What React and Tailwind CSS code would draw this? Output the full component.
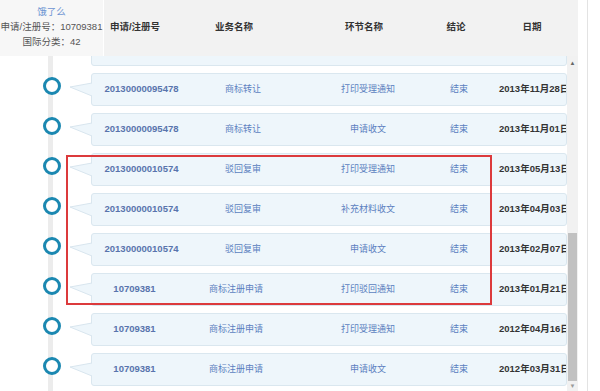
import React from "react";

const rows = [
  { id: "", biz: "", step: "", res: "", date: "", partial: true },
  { id: "20130000095478", biz: "商标转让", step: "打印受理通知", res: "结束", date: "2013年11月28日" },
  { id: "20130000095478", biz: "商标转让", step: "申请收文", res: "结束", date: "2013年11月01日" },
  { id: "20130000010574", biz: "驳回复审", step: "打印受理通知", res: "结束", date: "2013年05月13日" },
  { id: "20130000010574", biz: "驳回复审", step: "补充材料收文", res: "结束", date: "2013年04月03日" },
  { id: "20130000010574", biz: "驳回复审", step: "申请收文", res: "结束", date: "2013年02月07日" },
  { id: "10709381", biz: "商标注册申请", step: "打印驳回通知", res: "结束", date: "2013年01月21日", short: true },
  { id: "10709381", biz: "商标注册申请", step: "打印受理通知", res: "结束", date: "2012年04月16日", short: true },
  { id: "10709381", biz: "商标注册申请", step: "申请收文", res: "结束", date: "2012年03月31日", short: true },
];

function Row({ r }) {
  return (
    <div className="flex h-[40px] shrink-0">
      <div className="relative w-[68px] shrink-0">
        <div className="absolute left-[48px] top-0 bottom-0 w-[5px] bg-[#ececec]" />
        {!r.partial && (
          <div className="absolute left-[43px] top-[4px] w-[18px] h-[18px] rounded-full border-[3px] border-[#1b88b1] bg-white" />
        )}
      </div>
      <svg width="24" height="33" viewBox="0 0 24 33" className="relative z-10 -mr-[1px] shrink-0">
        <polygon points="2,14 24,10 24,23" fill="#eef6fb" />
        <polyline points="24,10 2,14 24,23" fill="none" stroke="#d8e5ee" strokeWidth="1" />
      </svg>
      <div className="flex h-[33px] w-[476px] shrink-0 items-center rounded-[3px] border border-[#dae7ef] bg-[#eef6fb] overflow-hidden">
        <div className={`w-[99px] shrink-0 text-center font-bold text-[9.5px] text-[#5874ad] ${r.short ? "pr-[14px]" : ""}`}>{r.id}</div>
        <div className={`w-[104px] shrink-0 text-center text-[9px] text-[#5b7fbf] ${r.short ? "pr-[14px]" : ""}`}>{r.biz}</div>
        <div className="w-[146px] shrink-0 text-center text-[9px] text-[#5b7fbf]">{r.step}</div>
        <div className="w-[36px] shrink-0 text-center text-[9px] text-[#5b7fbf]">{r.res}</div>
        <div className="w-[91px] shrink-0 pl-[22px] whitespace-nowrap overflow-hidden font-bold text-[9.5px] text-[#333333]">{r.date}</div>
      </div>
    </div>
  );
}

export default function App() {
  return (
    <div
      className="relative flex w-[600px] h-[391px] overflow-hidden bg-white"
      style={{ fontFamily: '"Liberation Sans", "Noto Sans CJK SC", sans-serif' }}
    >
      <div className="flex flex-col w-[578px] shrink-0">
        {/* Header */}
        <div className="flex h-[56px] shrink-0">
          <div className="w-[103px] shrink-0 bg-[#f7f7f7] flex flex-col items-center pt-[4px] text-[9.5px] leading-[15px] text-[#555555] whitespace-nowrap">
            <span className="text-[#6d93d2]">饿了么</span>
            <span>申请/注册号：10709381</span>
            <span>国际分类：42</span>
          </div>
          <div className="w-[2px] bg-white" />
          <div className="flex flex-1 items-start pt-[20px] bg-[#f2f2f2] text-[9.5px] font-bold text-[#333333]">
            <div className="w-[62px] text-center">申请/注册号</div>
            <div className="w-[136px] text-center">业务名称</div>
            <div className="w-[124px] text-center">环节名称</div>
            <div className="w-[60px] text-center">结论</div>
            <div className="w-[92px] text-center">日期</div>
          </div>
        </div>
        {/* Body */}
        <div className="relative flex flex-1 overflow-hidden">
          <div className="w-[567px] shrink-0 overflow-hidden">
            <div className="flex flex-col -mt-[23px]">
              {rows.map((r, i) => (
                <Row key={i} r={r} />
              ))}
            </div>
          </div>
          <div className="relative flex flex-col w-[11px] shrink-0 bg-[#f1f1f1]">
            <div className="h-[14px] flex items-center justify-center text-[6px] text-[#666666]">▲</div>
            <div className="h-[163px]" />
            <div className="flex-1 mx-[1px] bg-[#c1c1c1]" />
            <div className="h-[10px] flex items-center justify-center text-[6px] text-[#999999]">▼</div>
          </div>
          <div className="absolute left-[66px] top-[99px] w-[426px] h-[150px] border-2 border-[#dc3a3c] pointer-events-none" />
        </div>
      </div>
      <div className="w-[9px] shrink-0" />
      <div className="w-[1px] shrink-0 bg-[#e3e3e3]" />
      <div className="flex-1" />
    </div>
  );
}
